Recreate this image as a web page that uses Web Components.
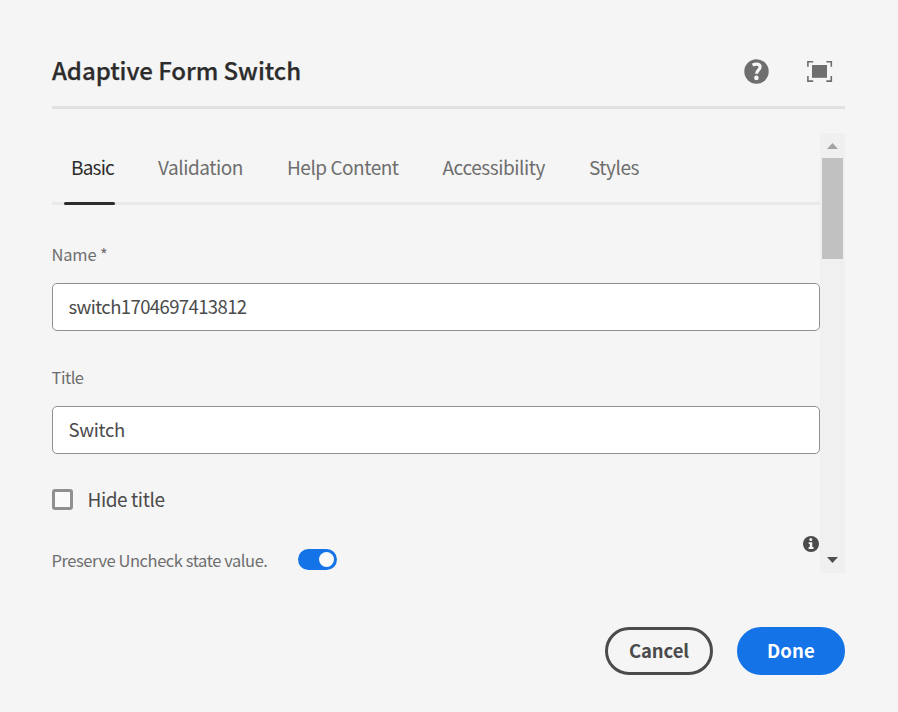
<!DOCTYPE html>
<html lang="en">
<head>
<meta charset="utf-8">
<title>Adaptive Form Switch</title>
<style>
html,body{margin:0;height:100%;overflow:hidden}
body{background:#f5f5f5;font-family:"Noto Sans CJK SC","Noto Sans",sans-serif;color:#4b4b4b}
</style>
</head>
<body>
<edit-dialog></edit-dialog>
<script>
const define = (name, html, setup) => customElements.define(name, class extends HTMLElement {
  connectedCallback() {
    if (this.shadowRoot) return;
    const t = document.createElement('template');
    t.innerHTML = html;
    this.attachShadow({mode: 'open'}).append(t.content.cloneNode(true));
    if (setup) setup(this, this.shadowRoot);
  }
});

/* Text tracked so that it fills the given width. */
define('fit-text', `<style>:host{display:inline-block;white-space:nowrap}span{display:inline-block}</style><span><slot></slot></span>`,
  (el, root) => {
    const s = root.querySelector('span'), w = +el.getAttribute('w');
    const extra = (w - s.getBoundingClientRect().width) / el.textContent.length;
    s.style.letterSpacing = extra.toFixed(3) + 'px';
    el.style.width = w + 'px';
  });

define('dialog-header', `<style>
:host{display:flex;box-sizing:border-box;height:109px;border-bottom:3px solid #e1e1e1;padding-top:49px;align-items:flex-start}
h1{margin:0;flex:1;font-size:24px;line-height:41px;font-weight:500;color:#2c2c2c;-webkit-text-stroke:.25px #2c2c2c}
svg{display:block}
.help{margin:10px 38px 0 0}.full{margin:11px 12px 0 0}
</style>
<h1><fit-text w="249">Adaptive Form Switch</fit-text></h1>
<svg class="help" width="25" height="25" viewBox="0 0 25 25"><circle cx="12.5" cy="12.5" r="12.2" fill="#6e6e6e"/><path d="M8.6 6.2C10 5.4 11.2 5.1 12.7 5.1c2.1 0 3.4 1.1 3.4 3 0 2.9-3.5 3.2-3.5 6.6" fill="none" stroke="#f5f5f5" stroke-width="3.2"/><circle cx="12.4" cy="18.9" r="2.3" fill="#f5f5f5"/></svg>
<svg class="full" width="26" height="23" viewBox="0 0 26 23"><path d="M.9 6.8V1.8H6.2M19.3 1.8h5v5M24.3 16v5.1h-5M6.2 21.1H.9V16" fill="none" stroke="#6e6e6e" stroke-width="1.6"/><rect x="5" y="5" width="15" height="12.8" fill="#6e6e6e"/></svg>`);

define('tab-item', `<style>
:host{display:block;position:relative;height:72px;font-size:19px;line-height:68px;color:#6e6e6e}
:host([selected]){color:#2c2c2c}
:host([selected])::after{content:"";position:absolute;left:-7px;right:-1px;bottom:0;height:3px;border-radius:1.5px;background:#2c2c2c}
</style><slot></slot>`);

define('tab-bar', `<style>
:host{display:flex;box-sizing:border-box;height:72px;padding-left:19px;gap:44px;background:linear-gradient(#e9e9e9,#e9e9e9) bottom/100% 3px no-repeat}
</style><slot></slot>`);

define('text-field', `<style>
:host{display:block}
label{display:block;font-size:16.5px;line-height:24px;color:#6e6e6e;margin:0 0 17px -.5px}
.box{box-sizing:border-box;height:48px;border:1px solid #909090;border-radius:5px;background:#fff;padding-left:15.5px;font-size:18.5px;line-height:45px;color:#4b4b4b}
</style><label><slot name="label"></slot></label><div class="box"><slot></slot></div>`);

define('check-box', `<style>
:host{display:flex;align-items:center;gap:14.5px;height:26px;font-size:19px;line-height:26px}
i{box-sizing:border-box;width:21px;height:21px;border:3px solid #909090;border-radius:3px;background:#fafafa}
</style><i></i><slot></slot>`);

define('toggle-row', `<style>
:host{display:flex;align-items:flex-start;height:41px;font-size:16.5px;color:#6e6e6e}
.label{box-sizing:border-box;width:246px;padding-top:18px;line-height:24px}
.label ::slotted(*){margin-left:-.5px}
.toggle{box-sizing:border-box;width:39px;height:21px;border-radius:11px;background:#1473e6;display:flex;justify-content:flex-end;padding:3px;margin-top:19px}
.toggle::after{content:"";width:15px;height:15px;border-radius:50%;background:#fafafa}
svg{margin:5px 0 0 auto}
</style><div class="label"><slot></slot></div><div class="toggle"></div>
<svg width="18" height="18" viewBox="0 0 18 18"><circle cx="9" cy="9" r="8" fill="#4b4b4b"/><circle cx="8.8" cy="4.6" r="1.5" fill="#f5f5f5"/><path d="M6.7 7.2h3.6v4.9h1.2v1.8H6.6v-1.8h1.2V9H6.7z" fill="#f5f5f5"/></svg>`);

define('scroll-bar', `<style>
:host{display:flex;flex-direction:column;align-items:center;box-sizing:border-box;width:25px;height:440px;background:#f0f0f0}
svg{display:block;flex:none}
.thumb{width:21px;height:101px;background:#c1c1c1}
.gap{flex:1}
</style><svg width="25" height="25"><path d="M12.5 10L18 16H7z" fill="#a3a3a3"/></svg><div class="thumb"></div><div class="gap"></div>
<svg width="25" height="25"><path d="M12.5 15L18 9H7z" fill="#505050"/></svg>`);

define('pill-button', `<style>
:host{display:flex;justify-content:center;box-sizing:border-box;width:108px;height:48px;border:3px solid #4b4b4b;border-radius:24px;font-size:18.5px;font-weight:700;line-height:41px;color:#4b4b4b}
:host([primary]){background:#1473e6;border-color:#1473e6;color:#fff}
</style><slot></slot>`);

define('edit-dialog', `<style>
:host{display:block;box-sizing:border-box;height:712px;padding:0 53px 0 52px;background:#f5f5f5}
.body{display:grid;grid-template-columns:768px 25px;height:440px;margin-top:24px}
.pane{display:flex;flex-direction:column}
.name{margin-top:37px}.title{margin-top:34px}
check-box{margin-top:32px}toggle-row{margin-top:18px}
footer{display:flex;justify-content:flex-end;gap:24px;margin-top:54px}
</style>
<dialog-header></dialog-header>
<div class="body"><div class="pane">
<tab-bar>
<tab-item selected><fit-text w="43">Basic</fit-text></tab-item>
<tab-item><fit-text w="85">Validation</fit-text></tab-item>
<tab-item><fit-text w="111.5">Help Content</fit-text></tab-item>
<tab-item><fit-text w="102.5">Accessibility</fit-text></tab-item>
<tab-item><fit-text w="50">Styles</fit-text></tab-item>
</tab-bar>
<text-field class="name"><fit-text slot="label" w="56">Name *</fit-text><fit-text w="178">switch1704697413812</fit-text></text-field>
<text-field class="title"><fit-text slot="label" w="32">Title</fit-text><fit-text w="56.5">Switch</fit-text></text-field>
<check-box><fit-text w="77">Hide title</fit-text></check-box>
<toggle-row><fit-text w="216">Preserve Uncheck state value.</fit-text></toggle-row>
</div><scroll-bar></scroll-bar></div>
<footer><pill-button><fit-text w="60">Cancel</fit-text></pill-button><pill-button primary><fit-text w="48">Done</fit-text></pill-button></footer>`);
</script>
</body>
</html>
